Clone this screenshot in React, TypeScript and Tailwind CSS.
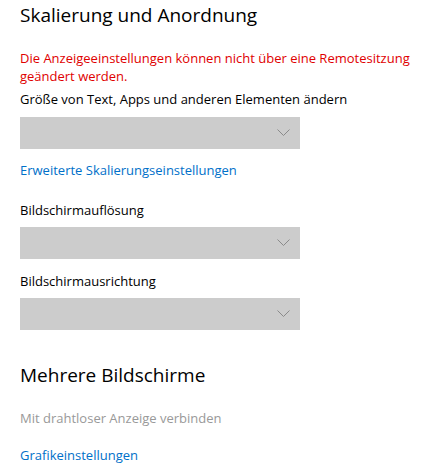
import React from "react";

function Chevron() {
  return (
    <svg width="13" height="8" viewBox="0 0 13 8" className="mr-[10px]">
      <path d="M0.5 0.5 L6.5 6.5 L12.5 0.5" fill="none" stroke="#8a8a8a" strokeWidth="1" />
    </svg>
  );
}

function Dropdown() {
  return (
    <div className="w-[280px] h-[32px] bg-[#cccccc] flex items-center justify-end">
      <Chevron />
    </div>
  );
}

export default function App() {
  return (
    <div
      className="w-[431px] h-[473px] bg-white pl-[20px] flex flex-col overflow-hidden whitespace-nowrap"
      style={{ fontFamily: '"Open Sans", "Noto Sans", sans-serif' }}
    >
      <div className="text-[19px] leading-[28px] text-black mt-[1px]">Skalierung und Anordnung</div>
      <div className="text-[13px] leading-[18px] text-[#e00000] mt-[20px]">
        Die Anzeigeeinstellungen können nicht über eine Remotesitzung
        <br />
        geändert werden.
      </div>
      <div className="text-[13px] leading-[20px] text-black mt-[4px]">Größe von Text, Apps und anderen Elementen ändern</div>
      <div className="mt-[8px]"><Dropdown /></div>
      <div className="text-[13px] leading-[20px] text-[#0070c9] mt-[11px]">Erweiterte Skalierungseinstellungen</div>
      <div className="text-[13px] leading-[20px] text-black mt-[20px]">Bildschirmauflösung</div>
      <div className="mt-[7px]"><Dropdown /></div>
      <div className="text-[13px] leading-[20px] text-black mt-[12px]">Bildschirmausrichtung</div>
      <div className="mt-[7px]"><Dropdown /></div>
      <div className="text-[19px] leading-[28px] text-black mt-[31px]">Mehrere Bildschirme</div>
      <div className="text-[13px] leading-[20px] text-[#999999] mt-[19px]">Mit drahtloser Anzeige verbinden</div>
      <div className="text-[13px] leading-[20px] text-[#0070c9] mt-[17px]">Grafikeinstellungen</div>
    </div>
  );
}
